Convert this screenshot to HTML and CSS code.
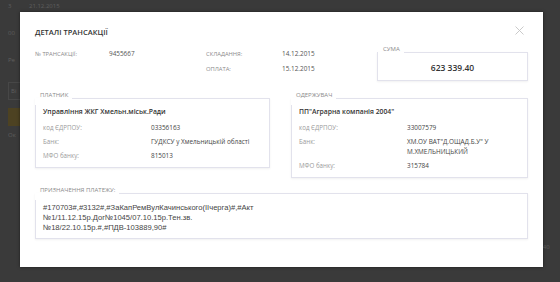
FILE: index.html
```html
<!DOCTYPE html>
<html lang="uk">
<head>
<meta charset="UTF-8">
<meta name="viewport" content="width=device-width, initial-scale=1.0">
<title>Деталі трансакції</title>
<link rel="stylesheet" href="styles.css">
</head>
<body>
<div class="page">
    <div class="side">
        <div class="side-row">3 <span class="side-date">21.12.2015</span></div>
        <div class="side-row">00</div>
        <div class="side-row">Ре</div>
        <div class="side-box">Ві</div>
        <div class="side-btn"></div>
        <div class="side-row">Ок</div>
    </div>
    <div class="bottom-row">
        <span class="b1">Управління ЖКГ Хмельн.міськ.Ради</span>
        <span class="b2">ПП"Аграрна компанія 2004"</span>
        <span class="b3">14.12.2015</span>
        <span class="b4">623 339.40</span>
    </div>
</div>

<div class="modal">
    <div class="modal-head">
        <h1>Деталі трансакції</h1>
        <svg class="close" width="9" height="9" viewBox="0 0 9 9">
            <path d="M0.5 0.5 L8.5 8.5 M8.5 0.5 L0.5 8.5" stroke="#c4c4c4" stroke-width="0.9" fill="none"/>
        </svg>
    </div>

    <div class="top">
        <div class="meta">
            <div class="meta-row">
                <span class="m-label">№ трансакції:</span>
                <span class="m-value">9455667</span>
                <span class="m-label">Складання:</span>
                <span class="m-value">14.12.2015</span>
            </div>
            <div class="meta-row">
                <span class="m-label"></span>
                <span class="m-value"></span>
                <span class="m-label">Оплата:</span>
                <span class="m-value">15.12.2015</span>
            </div>
        </div>
        <fieldset class="box sum">
            <legend>Сума</legend>
            <div class="amount">623 339.40</div>
        </fieldset>
    </div>

    <div class="parties">
        <fieldset class="box party">
            <legend>Платник</legend>
            <div class="party-name">Управління ЖКГ Хмельн.міськ.Ради</div>
            <div class="row"><span class="r-label">код ЄДРПОУ:</span><span class="r-value">03356163</span></div>
            <div class="row"><span class="r-label">Банк:</span><span class="r-value">ГУДКСУ у Хмельницькій області</span></div>
            <div class="row"><span class="r-label">МФО банку:</span><span class="r-value">815013</span></div>
        </fieldset>
        <fieldset class="box party">
            <legend>Одержувач</legend>
            <div class="party-name">ПП"Аграрна компанія 2004"</div>
            <div class="row"><span class="r-label">код ЄДРПОУ:</span><span class="r-value">33007579</span></div>
            <div class="row"><span class="r-label">Банк:</span><span class="r-value">ХМ.ОУ ВАТ"Д.ОЩАД.Б.У" У<br>М.ХМЕЛЬНИЦЬКИЙ</span></div>
            <div class="row"><span class="r-label">МФО банку:</span><span class="r-value">315784</span></div>
        </fieldset>
    </div>

    <fieldset class="box purpose">
        <legend>Призначення платежу:</legend>
        <div class="purpose-text">#170703#,#3132#,#ЗаКапРемВулКачинського(IIчерга)#,#Акт<br>№1/11.12.15р.Дог№1045/07.10.15р.Тен.зв.<br>№18/22.10.15р.#,#ПДВ-103889,90#</div>
    </fieldset>
</div>
</body>
</html>
```

FILE: styles.css
```css
body {
    margin: 0;
    padding: 0;
    background-color: #3a3a3a;
    font-family: "Open Sans", "Noto Sans", sans-serif;
    overflow: hidden;
}
.page {
    width: 560px;
    height: 282px;
    color: #5e5e5e;
    font-size: 6px;
}
.side {
    width: 60px;
    padding: 1px 0 0 8px;
}
.side-row {
    height: 10px;
    line-height: 10px;
    margin-bottom: 17px;
}
.side-date {
    margin-left: 16px;
}
.side-box {
    width: 30px;
    height: 16px;
    line-height: 16px;
    padding-left: 2px;
    border: 1px solid #474747;
    margin-bottom: 8px;
}
.side-btn {
    width: 20px;
    height: 18px;
    background-color: #4d4222;
    margin-bottom: 4px;
}
.bottom-row {
    display: flex;
    padding: 86px 0 0 152px;
    line-height: 8px;
}
.b1 { width: 145px; }
.b2 { width: 160px; }
.b3 { width: 62px; }

.modal {
    position: absolute;
    left: 20px;
    top: 12px;
    width: 523px;
    height: 255px;
    box-sizing: border-box;
    padding: 15px 15px 0 15px;
    background-color: #fff;
    box-shadow: 0 0 3px rgba(0, 0, 0, 0.5);
}
.modal-head {
    display: flex;
    justify-content: space-between;
    align-items: center;
    height: 10px;
    margin-bottom: 9px;
}
h1 {
    margin: 0;
    font-size: 7.5px;
    line-height: 10px;
    font-weight: 600;
    text-transform: uppercase;
    color: #333;
}
.close {
    margin-right: 4px;
    margin-top: -4px;
}

.top {
    display: flex;
    justify-content: space-between;
}
.meta {
    padding-top: 3px;
}
.meta-row {
    display: grid;
    grid-template-columns: 74px 97px 76px 80px;
    line-height: 10px;
    margin-bottom: 5px;
}
.m-label {
    font-size: 5.8px;
    text-transform: uppercase;
    color: #8a8a8a;
}
.m-value {
    font-size: 6.4px;
    color: #555;
}

.box {
    margin: 0;
    border: 1px solid #e2e2ec;
    box-shadow: 0 1px 2px rgba(0, 0, 0, 0.06);
    padding: 0 8px;
    min-width: 0;
}
.box legend {
    font-size: 6px;
    line-height: 7px;
    padding: 0 4px 6px 5px;
    margin-left: -8px;
    text-transform: uppercase;
    color: #8a8a8a;
}
.sum {
    width: 151px;
    box-sizing: border-box;
    padding-bottom: 6px;
}
.amount {
    text-align: center;
    font-size: 8.5px;
    font-weight: 600;
    line-height: 12px;
    color: #333;
    padding-top: 3px;
}

.parties {
    display: grid;
    grid-template-columns: 235px 237px;
    column-gap: 21px;
    align-items: start;
    margin-top: 11px;
}
.party {
    padding: 2px 7px 6px 7px;
}
.party-name {
    font-size: 6.8px;
    font-weight: 600;
    line-height: 10px;
    color: #333;
    margin-bottom: 6px;
}
.row {
    display: flex;
    line-height: 10px;
    margin-bottom: 4px;
}
.row:last-child {
    margin-bottom: 0;
}
.r-label {
    width: 108px;
    flex-shrink: 0;
    font-size: 6.2px;
    color: #9a9a9a;
}
.r-value {
    font-size: 6.4px;
    color: #444;
}

.purpose {
    margin-top: 9px;
    padding: 2px 7px 5px 7px;
}
.purpose-text {
    font-family: "Liberation Sans", Arial, sans-serif;
    font-size: 7.6px;
    line-height: 10px;
    color: #444;
    padding-top: 1px;
}
```
